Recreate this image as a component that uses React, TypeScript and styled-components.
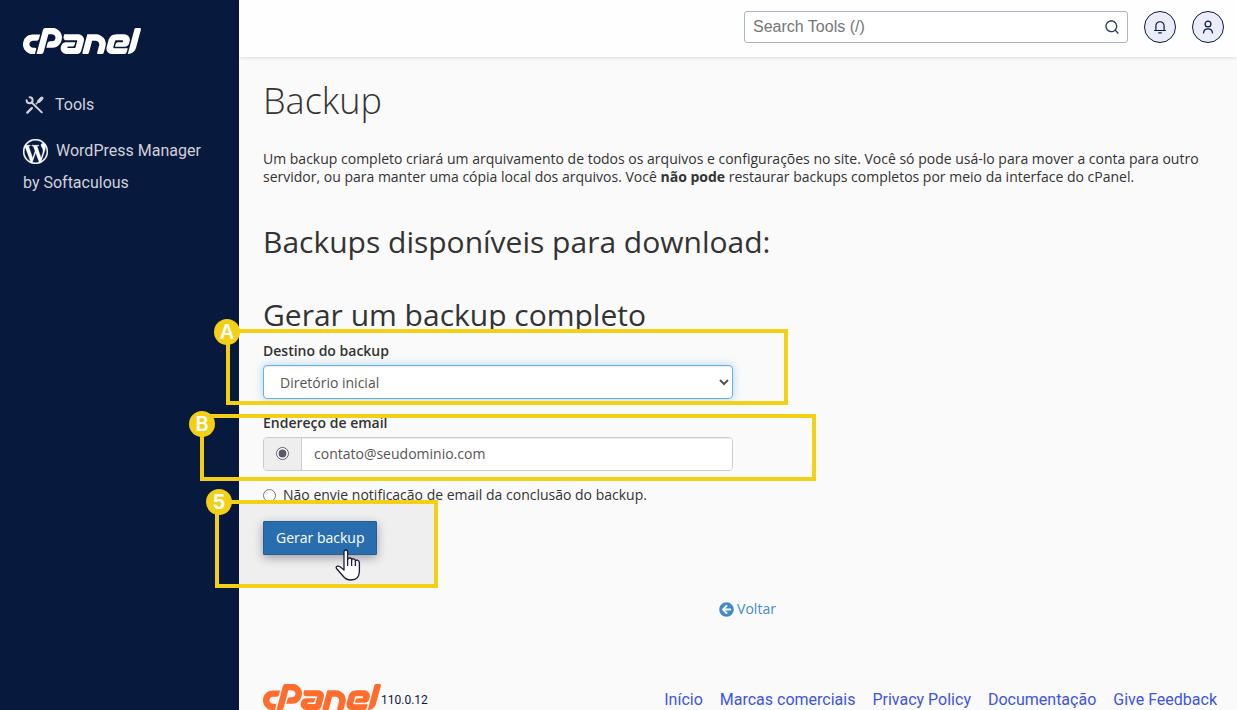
import React from "react";
import styled, { createGlobalStyle } from "styled-components";
import { SiCpanel, SiWordpress } from "react-icons/si";
import { RiNotification3Line, RiSearchLine } from "react-icons/ri";
import { FaArrowCircleLeft } from "react-icons/fa";

const navy = "#08193e";
const yellow = "#f3d016";

const GlobalStyle = createGlobalStyle`
  *, *::before, *::after { box-sizing: border-box; }
  body {
    margin: 0;
    background: #fafafa;
    color: #333;
    font: 14px/18px "Open Sans", sans-serif;
  }
`;

const Page = styled.div`
  display: flex;
  min-height: 100vh;
`;

const Sidebar = styled.nav`
  flex: 0 0 239px;
  padding: 28px 23px;
  background: ${navy};
  font: 16px/32px Roboto, sans-serif;
`;

const Logo = styled(SiCpanel)<{ $tone: string }>`
  display: block;
  width: 118px;
  height: 26px;
  color: ${(p) => p.$tone};
`;

const NavList = styled.ul`
  display: flex;
  flex-direction: column;
  gap: 14px;
  margin: 35px 0 0;
  padding: 0;
  list-style: none;
`;

const NavLink = styled.a`
  color: #d0d2d8;
  text-decoration: none;

  svg {
    vertical-align: -8px;
    margin-right: 8px;
  }
`;

const Column = styled.div`
  flex: 1;
  min-width: 0;
  display: flex;
  flex-direction: column;
`;

const TopBar = styled.header`
  display: flex;
  justify-content: flex-end;
  align-items: center;
  gap: 16px;
  height: 57px;
  padding: 0 13px 3px;
  background: #fefefe;
  box-shadow: 0 1px 4px rgba(0, 0, 0, 0.12);
`;

const Search = styled.form`
  display: flex;
  align-items: center;
  width: 384px;
  height: 32px;
  border: 1px solid #abb4cd;
  border-radius: 3px;
  background: #fff;
`;

const SearchInput = styled.input`
  flex: 1;
  min-width: 0;
  padding: 0 8px;
  border: 0;
  outline: 0;
  background: none;
  font: 16px/24px "Liberation Sans", Arial, sans-serif;

  &::placeholder { color: #757575; }
`;

const SearchButton = styled.button`
  display: flex;
  padding: 0 7px;
  border: 0;
  background: none;
  color: #2c3c5e;
`;

const RoundButton = styled.button`
  display: grid;
  place-items: center;
  width: 32px;
  height: 32px;
  padding: 0;
  border: 1px solid ${navy};
  border-radius: 50%;
  background: #ebecfa;
  color: ${navy};
`;

const Main = styled.main`
  flex: 1;
  padding: 24px 5px 0 24px;
`;

const Title = styled.h1`
  margin: 0 0 29px;
  font-size: 36px;
  font-weight: 300;
  line-height: 40px;
`;

const Intro = styled.p`
  margin: 0 0 39px;
`;

const Heading = styled.h2`
  margin: 0 0 40px;
  font-size: 30px;
  font-weight: 400;
  line-height: 33px;

  &:last-of-type { margin-bottom: 11px; }
`;

const BackupForm = styled.form`
  display: flex;
  flex-direction: column;
  gap: 15px;
  max-width: 470px;
`;

const Field = styled.div`
  position: relative;
  display: flex;
  flex-direction: column;
  gap: 5px;
`;

const FieldLabel = styled.label`
  font-weight: 600;
`;

const Select = styled.select`
  width: 100%;
  height: 34px;
  padding: 6px 12px;
  border: 1px solid #66afe9;
  border-radius: 4px;
  outline: 0;
  background: #fff;
  box-shadow: inset 0 1px 1px rgba(0, 0, 0, 0.08), 0 0 8px rgba(102, 175, 233, 0.5);
  color: #555;
  font: inherit;
`;

const InputGroup = styled.div`
  display: flex;
  height: 34px;
  border: 1px solid #ccc;
  border-radius: 4px;
  overflow: hidden;
  background: #fff;
`;

const Addon = styled.span`
  display: grid;
  place-items: center;
  width: 38px;
  padding-bottom: 2px;
  border-right: 1px solid #ccc;
  background: #eee;
`;

const Radio = styled.input`
  width: 13px;
  height: 13px;
  margin: 0;
  accent-color: #5d5a6b;
`;

const TextInput = styled.input`
  flex: 1;
  min-width: 0;
  padding: 6px 12px;
  border: 0;
  outline: 0;
  box-shadow: inset 0 1px 1px rgba(0, 0, 0, 0.08);
  color: #555;
  font: inherit;
`;

const RadioRow = styled.label`
  display: flex;
  align-items: center;
  gap: 7px;
`;

const Actions = styled.div`
  position: relative;
  align-self: flex-start;
  margin-top: 2px;
`;

const SubmitButton = styled.button`
  position: relative;
  height: 34px;
  padding: 0 12px;
  border: 1px solid #285e8e;
  border-radius: 1px;
  background: #286eae;
  box-shadow: 0 3px 10px rgba(40, 30, 60, 0.4);
  color: #fff;
  font: inherit;
`;

const Callout = styled.div<{ $inset: string; $fill?: string }>`
  position: absolute;
  inset: ${(p) => p.$inset};
  border: 4px solid ${yellow};
  background: ${(p) => p.$fill ?? "none"};
  pointer-events: none;
`;

const Badge = styled.span<{ $left: number; $top: number; $bold?: boolean }>`
  position: absolute;
  left: ${(p) => p.$left}px;
  top: ${(p) => p.$top}px;
  width: 26px;
  height: 26px;
  border-radius: 50%;
  background: ${yellow};
  color: #fff;
  font: ${(p) => (p.$bold ? 700 : 600)} 20px/26px Inter, sans-serif;
  text-align: center;
`;

const Cursor = styled.svg`
  position: absolute;
  left: 72px;
  top: 28px;
  width: 26px;
  height: 32px;
  pointer-events: none;
`;

const BackRow = styled.p`
  margin: 45px 0 0;
  text-align: center;
`;

const BackLink = styled.a`
  display: inline-flex;
  align-items: center;
  gap: 3px;
  color: #428bca;
  text-decoration: none;
`;

const Footer = styled.footer`
  display: flex;
  justify-content: space-between;
  align-items: flex-end;
  padding: 0 20px 0 24px;
  font-family: Roboto, sans-serif;
  line-height: 20px;
`;

const Brand = styled.div`
  display: flex;
  align-items: flex-end;
  color: ${navy};
  font-size: 12px;
`;

const FooterLinks = styled.nav`
  display: flex;
  flex-wrap: wrap;
  gap: 17px;
  font-size: 16px;
`;

const FooterLink = styled.a`
  color: #3d54e6;
  text-decoration: none;
`;

function CpanelLogo({ tone }: { tone: string }) {
  return <Logo $tone={tone} viewBox="0 9.4 24 5.2" title="cPanel" />;
}

function ToolsIcon() {
  return (
    <svg width="24" height="24" viewBox="0 0 24 24" fill="none" stroke="currentColor" aria-hidden="true">
      <path d="M6.600 3.300A3 3 0 1 1 3.600 6.300" strokeWidth="2" strokeLinecap="round" />
      <path d="M8.500 8.300 18.800 18.400" strokeWidth="2" strokeLinecap="round" />
      <path d="M4.300 18.600 8.800 14.200" strokeWidth="2.400" strokeLinecap="round" />
      <path d="M12.800 10.300 16 7" strokeWidth="1.400" />
      <path d="M15.800 7.200 18.800 4.200" strokeWidth="3.400" strokeLinecap="round" />
    </svg>
  );
}

function UserIcon() {
  return (
    <svg width="14" height="14" viewBox="0 0 14 14" fill="none" stroke="currentColor" strokeWidth="1.200" strokeLinecap="round" aria-hidden="true">
      <circle cx="7" cy="4" r="2.900" />
      <path d="M2.500 12.800Q3 8.900 7 8.900T11.500 12.800" />
    </svg>
  );
}

function HandCursor() {
  return (
    <Cursor viewBox="0 0 26 32" fill="#fff" stroke="#1b1b32" strokeWidth="1.300" strokeLinejoin="round" aria-hidden="true">
      <path d="M9 19V3Q9 1 10.800 1T12.600 3V11Q13 8.800 15 9T16.600 11Q17 9.500 18.800 9.800T20.400 12Q21 10.700 22.600 11.200T24.400 14V22Q24.400 31 16 31Q11 31 8 27L1.500 19.500Q.500 17.500 2.500 17.200Q4.500 17 6 18.500L9 21Z" />
      <path d="M12.600 11V17M16.600 11V17M20.400 12V17" fill="none" />
    </Cursor>
  );
}

const footerLinks = ["Início", "Marcas comerciais", "Privacy Policy", "Documentação", "Give Feedback"];

export default function App() {
  return (
    <>
      <GlobalStyle />
      <Page>
        <Sidebar>
          <CpanelLogo tone="#fff" />
          <NavList>
            <li><NavLink href="#tools"><ToolsIcon />Tools</NavLink></li>
            <li>
              <NavLink href="#wordpress">
                <SiWordpress size={25} color="#fff" strokeWidth={0.4} />WordPress Manager by Softaculous
              </NavLink>
            </li>
          </NavList>
        </Sidebar>
        <Column>
          <TopBar>
            <Search role="search">
              <SearchInput type="text" placeholder="Search Tools (/)" aria-label="Search Tools" />
              <SearchButton type="button" aria-label="Search"><RiSearchLine size={16} /></SearchButton>
            </Search>
            <RoundButton aria-label="Notifications"><RiNotification3Line size={14} /></RoundButton>
            <RoundButton aria-label="Account"><UserIcon /></RoundButton>
          </TopBar>
          <Main>
            <Title>Backup</Title>
            <Intro>
              Um backup completo criará um arquivamento de todos os arquivos e configurações no site. Você só pode
              usá-lo para mover a conta para outro servidor, ou para manter uma cópia local dos arquivos. Você{" "}
              <strong>não pode</strong> restaurar backups completos por meio da interface do cPanel.
            </Intro>
            <Heading>Backups disponíveis para download:</Heading>
            <Heading>Gerar um backup completo</Heading>
            <BackupForm>
              <Field>
                <FieldLabel htmlFor="destination">Destino do backup</FieldLabel>
                <Select id="destination">
                  <option>Diretório inicial</option>
                </Select>
                <Callout $inset="-13px -55px -6px -37px"><Badge $left={-16} $top={-14}>A</Badge></Callout>
              </Field>
              <Field>
                <FieldLabel htmlFor="email">Endereço de email</FieldLabel>
                <InputGroup>
                  <Addon>
                    <Radio type="radio" name="notify" defaultChecked aria-label="Enviar notificação de email" />
                  </Addon>
                  <TextInput id="email" type="email" defaultValue="contato@seudominio.com" />
                </InputGroup>
                <Callout $inset="0 -83px -10px -63px"><Badge $left={-15} $top={-7}>B</Badge></Callout>
              </Field>
              <RadioRow>
                <Radio type="radio" name="notify" />
                Não envie notificação de email da conclusão do backup.
              </RadioRow>
              <Actions>
                <Callout $inset="-21px -61px -33px -48px" $fill="rgba(0, 0, 0, 0.045)">
                  <Badge $left={-13} $top={-15} $bold>5</Badge>
                </Callout>
                <SubmitButton type="button">Gerar backup</SubmitButton>
                <HandCursor />
              </Actions>
            </BackupForm>
            <BackRow>
              <BackLink href="#voltar"><FaArrowCircleLeft size={15} />Voltar</BackLink>
            </BackRow>
          </Main>
          <Footer>
            <Brand><CpanelLogo tone="#ff6c2c" />110.0.12</Brand>
            <FooterLinks>
              {footerLinks.map((label) => <FooterLink key={label} href="#footer">{label}</FooterLink>)}
            </FooterLinks>
          </Footer>
        </Column>
      </Page>
    </>
  );
}
